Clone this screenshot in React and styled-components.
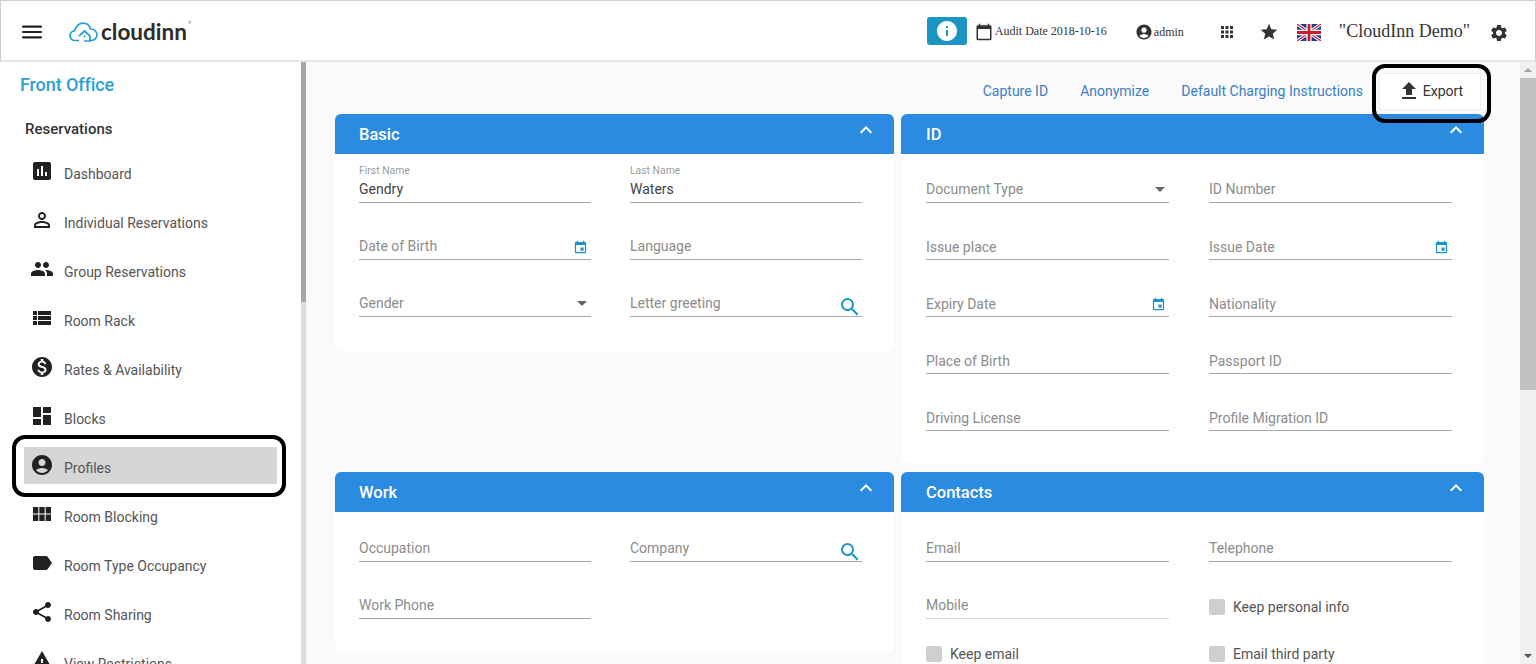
import React from 'react';
import styled, { createGlobalStyle } from 'styled-components';
import {
  MdAccountCircle, MdApps, MdArrowDropDown, MdAssessment, MdCalendarToday, MdDashboard, MdEvent,
  MdExpandLess, MdFileUpload, MdInfo, MdLabel, MdMenu, MdMonetizationOn, MdPeople, MdPermIdentity,
  MdSearch, MdSettings, MdShare, MdStar, MdViewList, MdViewModule, MdWarning,
} from 'react-icons/md';

const GlobalStyle = createGlobalStyle`
  html, body {
    margin: 0;
    height: 664px;
    overflow: hidden;
    background: #fafafa;
    font-family: Roboto, sans-serif;
  }
  * { box-sizing: border-box; }
`;

const Page = styled.div`
  width: 1536px;
  height: 664px;
  display: flex;
  flex-direction: column;
  overflow: hidden;
`;

const TopBar = styled.header`
  flex: 0 0 62px;
  display: flex;
  align-items: center;
  background: #fff;
  border: 1px solid #cfcfcf;
  border-bottom: 2px solid #e6e6e6;
  padding: 0 26px 0 18px;
  color: #212121;
`;

const MenuButton = styled.div`
  display: flex;
  margin: 2px 24px 0 0;
`;

const Logo = styled.div`
  display: flex;
  align-items: center;
  gap: 3px;
  margin-top: 2px;
`;

const Wordmark = styled.span`
  font-family: Lato, sans-serif;
  font-size: 22.5px;
  font-weight: 700;
  color: #2b2b2b;
`;

const Registered = styled.span`
  align-self: flex-start;
  margin: 3px 0 0 -2px;
  font-family: Lato, sans-serif;
  font-size: 4px;
  line-height: 4px;
  color: #2b2b2b;
`;

const TopRight = styled.div`
  margin-left: auto;
  display: flex;
  align-items: center;
`;

const InfoButton = styled.div`
  width: 40px;
  height: 28px;
  background: #1a95c4;
  border-radius: 3px;
  display: flex;
  align-items: center;
  justify-content: center;
  color: #fff;
`;

const TopItem = styled.div`
  display: flex;
  align-items: center;
  gap: ${p => p.$gap || 0}px;
  margin-left: ${p => p.$left}px;
  margin-top: ${p => p.$down || 2}px;
  font-family: "Liberation Serif", serif;
  font-size: ${p => p.$size || 12}px;
  color: #333;
  white-space: nowrap;
`;

const Body = styled.div`
  flex: 1;
  display: flex;
  min-height: 0;
`;

const Sidebar = styled.aside`
  flex: 0 0 301px;
  background: #fff;
  padding-top: 12px;
  overflow: hidden;
`;

const SideTitle = styled.h2`
  margin: 0 0 0 20px;
  font-size: 18px;
  line-height: 22px;
  font-weight: 500;
  letter-spacing: -0.1px;
  color: #2a9fd6;
`;

const SideGroup = styled.h3`
  margin: 23px 0 14px 25px;
  font-size: 15px;
  line-height: 20px;
  font-weight: 500;
  color: #333;
`;

const SideList = styled.nav`
  display: flex;
  flex-direction: column;
  gap: 12px;
  margin-left: 24px;
  width: 253px;
`;

const SideItem = styled.div`
  position: relative;
  height: 37px;
  flex: none;
  display: flex;
  align-items: center;
  gap: 10px;
  padding-left: 6px;
  background: ${p => (p.$active ? '#d6d6d6' : 'transparent')};
  font-size: 14px;
  color: #555;

  svg {
    color: #212121;
    margin-top: -1px;
  }

  span {
    margin-top: 5px;
  }
`;

const Callout = styled.div`
  position: absolute;
  top: ${p => p.$top}px;
  left: ${p => p.$left}px;
  right: ${p => p.$right}px;
  bottom: ${p => p.$bottom}px;
  border: 4px solid #000;
  border-radius: 13px;
  pointer-events: none;
`;

const SideScroll = styled.div`
  flex: 0 0 5px;
  display: flex;
  flex-direction: column;
  background: #dcdcdc;
`;

const SideThumb = styled.div`
  height: 240px;
  background: #a6a6a6;
`;

const Main = styled.main`
  flex: 1;
  min-width: 0;
  padding: 0 36px 0 29px;
  background: #fafafa;
  overflow: hidden;
`;

const Actions = styled.div`
  height: 52px;
  display: flex;
  align-items: center;
  justify-content: flex-end;
  gap: 32px;
  padding: 6px 3px 0 0;
`;

const ActionLink = styled.a`
  font-size: 14px;
  color: #3b80c4;
  white-space: nowrap;
`;

const ExportButton = styled.div`
  position: relative;
  width: 102px;
  height: 37px;
  margin-left: -16px;
  display: flex;
  align-items: center;
  justify-content: center;
  gap: 2px;
  background: #fff;
  border: 1px solid #f0f0f0;
  font-size: 14px;
  color: #333;
`;

const Cards = styled.div`
  display: grid;
  grid-template-columns: 559px 583px;
  column-gap: 7px;
  row-gap: 9px;
  align-items: start;
`;

const Card = styled.section`
  background: #fff;
  border-radius: 6px;
  overflow: hidden;
  padding-bottom: ${p => p.$bottom}px;
`;

const CardHead = styled.div`
  height: 40px;
  display: flex;
  align-items: center;
  justify-content: space-between;
  padding: 0 16px 0 ${p => p.$inset}px;
  background: #2a8be0;
  color: #fff;
  font-size: 16.5px;
  font-weight: 500;

  svg {
    margin-top: -8px;
  }
`;

const FieldGrid = styled.div`
  display: grid;
  grid-template-columns: ${p => p.$col}px ${p => p.$col}px;
  column-gap: ${p => p.$gap}px;
  row-gap: 15px;
  padding: ${p => p.$top}px 0 0 ${p => p.$inset}px;
`;

const Field = styled.div`
  height: 42px;
  display: flex;
  align-items: flex-end;
  border-bottom: 1px solid ${p => (p.$faint ? '#d2d2d2' : '#a8a8a8')};
`;

const FieldText = styled.div`
  flex: 1;
  padding-bottom: ${p => p.$pad}px;
  font-size: 14px;
  line-height: 20px;
  color: ${p => (p.$filled ? '#444' : '#8c8c8c')};
`;

const FloatLabel = styled.div`
  font-size: 10.4px;
  line-height: 12px;
  margin-bottom: 2px;
  color: #9c9c9c;
`;

const DateIcon = styled(MdEvent)`
  color: #1a95c4;
  margin: 0 3px 4px 0;
`;

const SearchIcon = styled(MdSearch)`
  color: #1a95c4;
  margin-bottom: -3px;
`;

const Caret = styled(MdArrowDropDown)`
  color: #666;
  margin: 0 -3px 1px 0;
`;

const Check = styled.label`
  display: flex;
  align-items: center;
  gap: 8px;
  height: 16px;
  margin-top: ${p => p.$top}px;
  font-size: 14px;
  color: #555;
`;

const CheckBox = styled.span`
  width: 16px;
  height: 16px;
  border-radius: 2px;
  background: #cfcfcf;
`;

const PageScroll = styled.div`
  flex: 0 0 16px;
  display: flex;
  flex-direction: column;
  align-items: center;
  background: #f1f1f1;
`;

const ScrollArrow = styled.div`
  flex: none;
  height: 16px;
  display: flex;
  align-items: center;
  justify-content: center;
  font-size: 0;

  &::before {
    content: '';
    border-left: 4px solid transparent;
    border-right: 4px solid transparent;
    ${p => (p.$down ? 'border-top: 4px solid #505050;' : 'border-bottom: 4px solid #a3a3a3;')}
  }
`;

const ScrollThumb = styled.div`
  width: 100%;
  height: 312px;
  background: #c1c1c1;
`;

const ScrollGap = styled.div`
  flex: 1;
`;

const sideItems = [
  ['Dashboard', MdAssessment],
  ['Individual Reservations', MdPermIdentity],
  ['Group Reservations', MdPeople],
  ['Room Rack', MdViewList],
  ['Rates & Availability', MdMonetizationOn],
  ['Blocks', MdDashboard],
  ['Profiles', MdAccountCircle],
  ['Room Blocking', MdViewModule],
  ['Room Type Occupancy', MdLabel],
  ['Room Sharing', MdShare],
  ['View Restrictions', MdWarning],
];

function CloudLogo() {
  return (
    <svg width="29" height="20" viewBox="0 0 29 20" fill="none" stroke="#2a9fd6" strokeWidth="1.7">
      <path d="M10 18.5H6C3 18.5 1 16.3 1 13.6 1 11 3 9 5.5 8.8 6.5 4.5 10 1.2 14 1.2c3.5 0 6.5 2.3 7.5 5.8 3.5-.2 6.5 2.5 6.5 6 0 3-2.5 5.5-6 5.5h-2" />
      <path d="M10 14l5.5-5 5.5 5v5h-6" />
      <circle cx="15.5" cy="14.5" r="1" fill="#2a9fd6" stroke="none" />
    </svg>
  );
}

function UkFlag() {
  return (
    <svg width="24" height="17" viewBox="0 0 60 40" preserveAspectRatio="none">
      <rect width="60" height="40" fill="#1f3f8f" />
      <path d="M0 0L60 40M60 0L0 40" stroke="#fff" strokeWidth="8" />
      <path d="M0 0L60 40M60 0L0 40" stroke="#cf1b2b" strokeWidth="3" />
      <path d="M30 0V40M0 20H60" stroke="#fff" strokeWidth="13" />
      <path d="M30 0V40M0 20H60" stroke="#cf1b2b" strokeWidth="7" />
    </svg>
  );
}

function Input({ label, value, adorn, pad = 2, faint }) {
  return (
    <Field $faint={faint}>
      <FieldText $filled={!!value} $pad={pad}>
        {value ? <FloatLabel>{label}</FloatLabel> : null}
        {value || label}
      </FieldText>
      {adorn === 'date' && <DateIcon size={15} />}
      {adorn === 'search' && <SearchIcon size={24} />}
      {adorn === 'select' && <Caret size={24} />}
    </Field>
  );
}

function Panel({ title, col, gap, inset, top = 7, bottom, children }) {
  return (
    <Card $bottom={bottom}>
      <CardHead $inset={inset}>
        {title}
        <MdExpandLess size={24} />
      </CardHead>
      <FieldGrid $col={col} $gap={gap} $inset={inset} $top={top}>{children}</FieldGrid>
    </Card>
  );
}

function Tick({ label, top }) {
  return (
    <Check $top={top}>
      <CheckBox />
      {label}
    </Check>
  );
}

export default function App() {
  return (
    <Page>
      <GlobalStyle />
      <TopBar>
        <MenuButton>
          <MdMenu size={26} />
        </MenuButton>
        <Logo>
          <CloudLogo />
          <Wordmark>cloudinn</Wordmark>
          <Registered>®</Registered>
        </Logo>
        <TopRight>
          <InfoButton>
            <MdInfo size={24} />
          </InfoButton>
          <TopItem $left={8} $gap={2}>
            <MdCalendarToday size={18} />
            Audit Date 2018-10-16
          </TopItem>
          <TopItem $left={28} $gap={1} $down={3}>
            <MdAccountCircle size={18} />
            admin
          </TopItem>
          <TopItem $left={34}>
            <MdApps size={18} />
          </TopItem>
          <TopItem $left={23}>
            <MdStar size={20} />
          </TopItem>
          <TopItem $left={18} $down={3}>
            <UkFlag />
          </TopItem>
          <TopItem $left={18} $size={18}>"CloudInn Demo"</TopItem>
          <TopItem $left={19} $down={5}>
            <MdSettings size={20} />
          </TopItem>
        </TopRight>
      </TopBar>
      <Body>
        <Sidebar>
          <SideTitle>Front Office</SideTitle>
          <SideGroup>Reservations</SideGroup>
          <SideList>
            {sideItems.map(([name, Icon]) => (
              <SideItem key={name} $active={name === 'Profiles'}>
                <Icon size={24} />
                <span>{name}</span>
                {name === 'Profiles' && <Callout $top={-12} $left={-12} $right={-9} $bottom={-13} />}
              </SideItem>
            ))}
          </SideList>
        </Sidebar>
        <SideScroll>
          <SideThumb />
        </SideScroll>
        <Main>
          <Actions>
            <ActionLink>Capture ID</ActionLink>
            <ActionLink>Anonymize</ActionLink>
            <ActionLink>Default Charging Instructions</ActionLink>
            <ExportButton>
              <MdFileUpload size={24} />
              Export
              <Callout $top={-10} $left={-8} $right={-11} $bottom={-14} />
            </ExportButton>
          </Actions>
          <Cards>
            <Panel title="Basic" col={232} gap={39} inset={24} bottom={34}>
              <Input label="First Name" value="Gendry" pad={3} />
              <Input label="Last Name" value="Waters" pad={3} />
              <Input label="Date of Birth" adorn="date" pad={3} />
              <Input label="Language" pad={3} />
              <Input label="Gender" adorn="select" pad={3} />
              <Input label="Letter greeting" adorn="search" pad={3} />
            </Panel>
            <Panel title="ID" col={243} gap={40} inset={25} bottom={32}>
              <Input label="Document Type" adorn="select" pad={3} />
              <Input label="ID Number" pad={3} />
              <Input label="Issue place" />
              <Input label="Issue Date" adorn="date" />
              <Input label="Expiry Date" adorn="date" />
              <Input label="Nationality" />
              <Input label="Place of Birth" />
              <Input label="Passport ID" />
              <Input label="Driving License" />
              <Input label="Profile Migration ID" />
            </Panel>
            <Panel title="Work" col={232} gap={39} inset={24} top={8} bottom={33}>
              <Input label="Occupation" pad={3} />
              <Input label="Company" adorn="search" pad={3} />
              <Input label="Work Phone" pad={3} />
            </Panel>
            <Panel title="Contacts" col={243} gap={40} inset={25} top={8} bottom={32}>
              <Input label="Email" pad={3} />
              <Input label="Telephone" pad={3} />
              <Input label="Mobile" pad={3} faint />
              <Tick label="Keep personal info" top={22} />
              <Tick label="Keep email" top={12} />
              <Tick label="Email third party" top={12} />
            </Panel>
          </Cards>
        </Main>
        <PageScroll>
          <ScrollArrow />
          <ScrollThumb />
          <ScrollGap />
          <ScrollArrow $down />
        </PageScroll>
      </Body>
    </Page>
  );
}
